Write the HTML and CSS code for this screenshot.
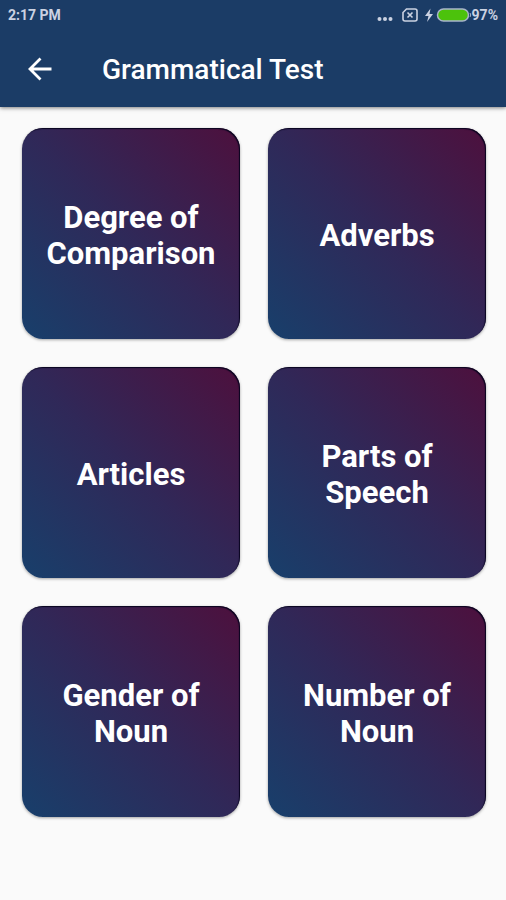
FILE: index.html
```html
<!DOCTYPE html>
<html lang="en">
<head>
<meta charset="utf-8">
<meta name="viewport" content="width=device-width, initial-scale=1">
<title>Grammatical Test</title>
<link rel="stylesheet" href="styles.css">
</head>
<body>
<header class="top">
  <div class="status">
    <span>2:17 PM</span>
    <div class="indicators">
      <svg class="dots" width="16" height="16" viewBox="0 0 16 16" aria-hidden="true"><circle cx="2.5" cy="12" r="2"/><circle cx="8" cy="12" r="2"/><circle cx="13.5" cy="12" r="2"/></svg>
      <svg class="sim" width="18" height="16" viewBox="0 0 18 16" aria-hidden="true"><path d="M5.500 2H14q2 0 2 2v8q0 2-2 2H4q-2 0-2-2V5.500z"/><path d="M6.500 5.500l5 5M11.500 5.500l-5 5"/></svg>
      <svg class="bolt" width="8" height="16" viewBox="0 0 8 16" aria-hidden="true"><path d="M5.500 1.500L0 9h3.500L2 15l6-8H4.500z"/></svg>
      <svg class="battery" width="36" height="16" viewBox="0 0 36 16" aria-hidden="true"><rect x="1.500" y="2" width="31" height="12" rx="6"/><path d="M34 6q1.500 2 0 4"/></svg>
      <span>97%</span>
    </div>
  </div>
  <div class="bar">
    <button class="back" type="button" aria-label="Back">
      <svg width="32" height="32" viewBox="0 0 32 32" aria-hidden="true"><path d="M27.500 15H6M16.500 4.500L6 15l10.500 10.500"/></svg>
    </button>
    <h1>Grammatical Test</h1>
  </div>
</header>
<main class="topics">
  <button class="card" type="button">Degree of Comparison</button>
  <button class="card" type="button">Adverbs</button>
  <button class="card" type="button">Articles</button>
  <button class="card" type="button">Parts of Speech</button>
  <button class="card" type="button">Gender of Noun</button>
  <button class="card" type="button">Number of Noun</button>
</main>
</body>
</html>
```
FILE: styles.css
```css
* {
  box-sizing: border-box;
}

body {
  margin: 0;
  background: #fafafa;
  font-family: Roboto, "Liberation Sans", sans-serif;
}

.top {
  background: #1b3c66;
  color: #fff;
  box-shadow: 0 1px 4px rgba(0, 0, 0, 0.5);
}

.status {
  display: flex;
  align-items: center;
  justify-content: space-between;
  height: 30px;
  padding: 0 8px;
  color: #cbd2e2;
  font-size: 14px;
  font-weight: 700;
}

.indicators {
  display: flex;
  align-items: center;
}

.dots {
  margin-right: 8px;
  fill: #cbd2e2;
}

.sim {
  margin-right: 6px;
  fill: none;
  stroke: #cbd2e2;
  stroke-width: 1.6;
}

.bolt {
  margin-right: 3px;
  fill: #cbd2e2;
}

.battery rect {
  fill: #4cc20c;
  stroke: #a9b4ca;
  stroke-width: 1.5;
}

.battery path {
  fill: none;
  stroke: #a9b4ca;
}

.bar {
  display: flex;
  align-items: center;
  gap: 46px;
  height: 77px;
  padding: 2px 24px 0;
}

.back {
  display: flex;
  padding: 0;
  border: 0;
  background: none;
  color: inherit;
}

.back path {
  fill: none;
  stroke: currentColor;
  stroke-width: 2.8;
}

h1 {
  margin: 0;
  font-size: 28px;
  font-weight: 500;
  line-height: 36px;
}

.topics {
  display: grid;
  grid-template-columns: 1fr 1fr;
  grid-auto-rows: 211px;
  gap: 28px;
  padding: 21px 20px 80px 22px;
}

.card {
  padding: 4px 20px 0;
  border: 0;
  border-radius: 21px;
  background: linear-gradient(45deg, #183f6b, #302858 50%, #4d103d);
  box-shadow: inset -1px 1px 1px #080520, 0 1px 3px rgba(0, 0, 0, 0.35);
  color: #fff;
  font-family: inherit;
  font-size: 31px;
  font-weight: 700;
  line-height: 36px;
}
```
